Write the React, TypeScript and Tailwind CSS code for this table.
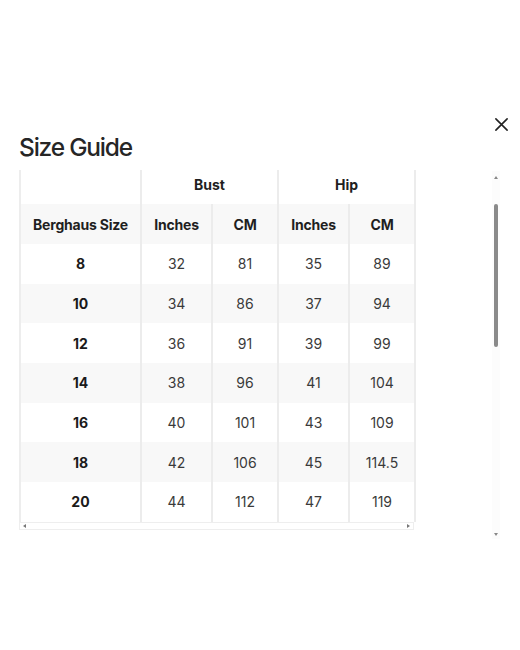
import React from "react";

const rows = [
  ["8", "32", "81", "35", "89"],
  ["10", "34", "86", "37", "94"],
  ["12", "36", "91", "39", "99"],
  ["14", "38", "96", "41", "104"],
  ["16", "40", "101", "43", "109"],
  ["18", "42", "106", "45", "114.5"],
  ["20", "44", "112", "47", "119"],
];

export default function App() {
  return (
    <div
      className="w-[520px] h-[650px] bg-white text-[#1f1f1f]"
      style={{ fontFamily: "Inter, 'Noto Sans', sans-serif" }}
    >
      <div className="pt-[116px] pl-[19px] pr-[10px]">
        <div className="flex items-start justify-between">
          <h1 className="mt-[15px] text-[24.5px] leading-[32px] font-medium tracking-[-1.2px] text-[#262626]">
            Size Guide
          </h1>
          <svg width="15" height="15" viewBox="0 0 16 16" className="mt-[1px] mr-[1px]">
            <path d="M2 2 L14 14 M14 2 L2 14" stroke="#222" strokeWidth="1.7" strokeLinecap="round" />
          </svg>
        </div>
        <div className="mt-[7px] flex">
          <div className="w-[395px]">
            <div className="grid grid-cols-[121px_71px_66px_71px_66px] text-[14px] border-l-2 border-[#ededed]">
              <div className="h-[34px] border-r-2 border-[#ececec] bg-white" />
              <div className="col-span-2 h-[34px] pb-[6px] flex items-center justify-center font-bold border-r-2 border-[#ececec]">
                Bust
              </div>
              <div className="col-span-2 h-[34px] pb-[6px] flex items-center justify-center font-bold border-r-2 border-[#ececec]">
                Hip
              </div>
              {["Berghaus Size", "Inches", "CM", "Inches", "CM"].map((h, i) => (
                <div
                  key={i}
                  className="h-[40px] flex items-center justify-center font-bold bg-[#f8f8f8] border-r-2 border-[#ececec] tracking-[-0.2px]"
                >
                  {h}
                </div>
              ))}
              {rows.map((r, ri) =>
                r.map((c, ci) => (
                  <div
                    key={ri + "-" + ci}
                    className={
                      "h-[39.67px] flex items-center justify-center border-r-2 border-[#ececec] " +
                      (ri % 2 === 1 ? "bg-[#f8f8f8] " : "bg-white ") +
                      (ci === 0 ? "font-bold text-[#1a1a1a]" : "text-[#3a3a3a]")
                    }
                  >
                    {c}
                  </div>
                ))
              )}
            </div>
            <div className="h-[8px] flex items-center justify-between px-[3px] border border-[#eeeeee] bg-white">
              <svg width="4" height="4" viewBox="0 0 4 4">
                <path d="M3 0 L0 2 L3 4 Z" fill="#777" />
              </svg>
              <svg width="4" height="4" viewBox="0 0 4 4">
                <path d="M1 0 L4 2 L1 4 Z" fill="#777" />
              </svg>
            </div>
          </div>
          <div className="ml-[78px] w-[8px] h-[368px] mt-[1px] flex flex-col items-center bg-[#fcfcfc]">
            <svg width="4" height="4" viewBox="0 0 4 4" className="mt-[5px]">
              <path d="M0 3 L2 0 L4 3 Z" fill="#888" />
            </svg>
            <div className="mt-[24px] w-[4px] h-[143px] rounded-full bg-[#8a8a8a]" />
            <div className="flex-1" />
            <svg width="4" height="4" viewBox="0 0 4 4" className="mb-[3px]">
              <path d="M0 1 L2 4 L4 1 Z" fill="#888" />
            </svg>
          </div>
        </div>
      </div>
    </div>
  );
}
